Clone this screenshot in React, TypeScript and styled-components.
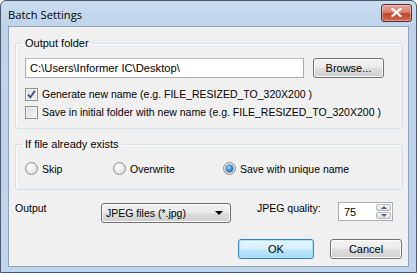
import React from 'react';
import styled, { createGlobalStyle } from 'styled-components';

const GlobalStyle = createGlobalStyle`
  html, body {
    margin: 0;
    padding: 0;
    background: #ffffff;
  }
  body {
    font-family: "Liberation Sans", Arial, sans-serif;
    font-size: 10.5px;
    color: #000;
  }
`;

const Window = styled.div`
  width: 417px;
  height: 273px;
  box-sizing: border-box;
  border: 1px solid #4a5a6c;
  border-radius: 6px 6px 0 0;
  background: linear-gradient(to bottom, #cadcef 0px, #bed3ea 26px, #c0d5eb 100%);
  display: flex;
  flex-direction: column;
  padding: 0 7px 5px 7px;
  overflow: hidden;
`;

const TitleBar = styled.div`
  height: 25px;
  display: flex;
  align-items: center;
  justify-content: space-between;
  flex-shrink: 0;
`;

const Title = styled.span`
  font-family: "Open Sans", "Noto Sans", sans-serif;
  font-size: 11.2px;
  color: #000;
  margin-top: 1px;
`;

const CloseButton = styled.div`
  width: 29px;
  height: 16px;
  margin-right: -3px;
  margin-top: -2px;
  border: 1px solid #5c2a2a;
  border-radius: 3px;
  background: linear-gradient(to bottom, #e3a59a 0%, #d7826f 45%, #c1432b 55%, #cd6a52 100%);
  display: flex;
  align-items: center;
  justify-content: center;
  box-shadow: inset 0 0 0 1px rgba(255, 255, 255, 0.35);
`;

const Content = styled.div`
  flex: 1;
  border: 1px solid #8ea3bb;
  background: #f0f0f0;
  padding: 9px 5px 0 6px;
  display: flex;
  flex-direction: column;
`;

const Group = styled.fieldset<{ $height: number; $gap?: number }>`
  margin: ${(p) => p.$gap ?? 0}px 0 0 0;
  height: ${(p) => p.$height}px;
  box-sizing: border-box;
  border: 1px solid #d5dfe5;
  border-radius: 3px;
  box-shadow: 1px 1px 0 #fff inset;
  padding: 2px 9px 0 9px;
  min-width: 0;
`;

const Legend = styled.legend`
  padding: 0 2px;
  margin-left: -2px;
  line-height: 14px;
  font-size: 11px;
`;

const FolderRow = styled.div`
  display: flex;
  align-items: center;
  gap: 9px;
  margin-top: 6px;
  margin-bottom: 7px;
`;

const TextField = styled.div`
  width: 279px;
  height: 20px;
  box-sizing: border-box;
  border: 1px solid #abadb3;
  border-top-color: #b5b9c0;
  background: #fff;
  display: flex;
  align-items: center;
  padding-left: 4px;
  font-size: 11.2px;
`;

const Button = styled.div<{ $default?: boolean; $width: number }>`
  width: ${(p) => p.$width}px;
  height: 20px;
  box-sizing: border-box;
  border: 1px solid ${(p) => (p.$default ? '#3c7fb1' : '#707070')};
  border-radius: 3px;
  background: ${(p) =>
    p.$default
      ? 'linear-gradient(to bottom, #eaf6fd 0%, #d9f0fc 45%, #bee6fd 55%, #a7d9f5 100%)'
      : 'linear-gradient(to bottom, #f2f2f2 0%, #ebebeb 45%, #dddddd 55%, #cfcfcf 100%)'};
  box-shadow: inset 0 0 0 1px ${(p) => (p.$default ? '#a6e6fb' : '#fcfcfc')};
  display: flex;
  align-items: center;
  justify-content: center;
  font-size: 11px;
`;

const CheckRow = styled.div`
  display: flex;
  align-items: center;
  height: 18px;
  gap: 4px;
`;

const Box = styled.div`
  width: 13px;
  height: 13px;
  box-sizing: border-box;
  border: 1px solid #8e8f8f;
  background: linear-gradient(135deg, #dcdcdc 0%, #f4f4f4 100%);
  box-shadow: inset 0 0 0 1px #f4f4f4;
  position: relative;
  flex-shrink: 0;
`;

const RadioRow = styled.div`
  display: flex;
  align-items: center;
  margin-top: 9px;
`;

const RadioItem = styled.div<{ $width: number }>`
  display: flex;
  align-items: center;
  gap: 4px;
  width: ${(p) => p.$width}px;
`;

const RadioCircle = styled.div`
  width: 13px;
  height: 13px;
  box-sizing: border-box;
  border-radius: 50%;
  border: 1px solid #8e8f8f;
  background: radial-gradient(circle at 40% 40%, #ffffff 0%, #e0e0e0 70%, #c8c8c8 100%);
  display: flex;
  align-items: center;
  justify-content: center;
  flex-shrink: 0;
`;

const RadioDot = styled.div`
  width: 7px;
  height: 7px;
  border-radius: 50%;
  background: radial-gradient(circle at 40% 35%, #a9e2ff 0%, #3a8fd0 45%, #154c8a 100%);
  box-shadow: 0 0 0 0.5px #1c4f80;
`;

const OptionsRow = styled.div`
  display: flex;
  align-items: center;
  margin-top: 12px;
  height: 21px;
`;

const Label = styled.span<{ $width: number; $offset?: number }>`
  width: ${(p) => p.$width}px;
  margin-left: ${(p) => p.$offset ?? 0}px;
  margin-top: -10px;
`;

const Combo = styled.div`
  width: 130px;
  height: 20px;
  box-sizing: border-box;
  border: 1px solid #707070;
  border-radius: 3px;
  background: linear-gradient(to bottom, #f2f2f2 0%, #ebebeb 45%, #dddddd 55%, #cfcfcf 100%);
  box-shadow: inset 0 0 0 1px #fcfcfc;
  display: flex;
  align-items: center;
  justify-content: space-between;
  padding: 0 7px 0 4px;
`;

const Arrow = styled.div`
  width: 0;
  height: 0;
  border-left: 4px solid transparent;
  border-right: 4px solid transparent;
  border-top: 4px solid #000;
`;

const Spin = styled.div`
  width: 55px;
  height: 19px;
  box-sizing: border-box;
  border: 1px solid #abadb3;
  background: #fff;
  display: flex;
  align-items: stretch;
  margin-left: auto;
  margin-right: 10px;
  margin-top: -2px;
`;

const SpinValue = styled.div`
  flex: 1;
  display: flex;
  align-items: center;
  padding-left: 5px;
  font-size: 11px;
`;

const SpinButtons = styled.div`
  width: 15px;
  display: flex;
  flex-direction: column;
  gap: 1px;
  padding: 1px;
`;

const SpinButton = styled.div<{ $up?: boolean }>`
  flex: 1;
  border: 1px solid #b7b7b7;
  border-radius: 2px;
  background: linear-gradient(to bottom, #f6f6f6, #dedede);
  display: flex;
  align-items: center;
  justify-content: center;
  &::after {
    content: '';
    border-left: 3px solid transparent;
    border-right: 3px solid transparent;
    ${(p) => (p.$up ? 'border-bottom: 3px solid #4d6185;' : 'border-top: 3px solid #4d6185;')}
  }
`;

const ButtonRow = styled.div`
  display: flex;
  justify-content: flex-end;
  gap: 16px;
  margin-top: 16px;
  padding-right: 1px;
`;

const CheckMark = () => (
  <svg width="11" height="11" viewBox="0 0 11 11" style={{ position: 'absolute', left: 0, top: 0 }}>
    <path d="M2 5.5 L4.3 8.3 L9 1.8" fill="none" stroke="#3b4f86" strokeWidth="1.8" />
  </svg>
);

const CloseGlyph = () => (
  <svg width="11" height="9" viewBox="0 0 11 9">
    <path d="M1.5 1 L9.5 8 M9.5 1 L1.5 8" stroke="#fff" strokeWidth="2.2" strokeLinecap="square" />
  </svg>
);

const Checkbox: React.FC<{ checked?: boolean; label: string }> = ({ checked, label }) => (
  <CheckRow>
    <Box>{checked && <CheckMark />}</Box>
    <span>{label}</span>
  </CheckRow>
);

const Radio: React.FC<{ on?: boolean; label: string; width: number }> = ({ on, label, width }) => (
  <RadioItem $width={width}>
    <RadioCircle>{on && <RadioDot />}</RadioCircle>
    <span>{label}</span>
  </RadioItem>
);

const App: React.FC = () => {
  return (
    <>
      <GlobalStyle />
      <Window>
        <TitleBar>
          <Title>Batch Settings</Title>
          <CloseButton>
            <CloseGlyph />
          </CloseButton>
        </TitleBar>
        <Content>
          <Group $height={93}>
            <Legend>Output folder</Legend>
            <FolderRow>
              <TextField>C:\Users\Informer IC\Desktop\</TextField>
              <Button $width={71}>Browse...</Button>
            </FolderRow>
            <Checkbox checked label="Generate new name (e.g. FILE_RESIZED_TO_320X200 )" />
            <Checkbox label="Save in initial folder with new name (e.g. FILE_RESIZED_TO_320X200 )" />
          </Group>
          <Group $height={53} $gap={8}>
            <Legend>If file already exists</Legend>
            <RadioRow>
              <Radio label="Skip" width={88} />
              <Radio label="Overwrite" width={110} />
              <Radio on label="Save with unique name" width={160} />
            </RadioRow>
          </Group>
          <OptionsRow>
            <Label $width={86}>Output</Label>
            <Combo>
              <span>JPEG files (*.jpg)</span>
              <Arrow />
            </Combo>
            <Label $width={80} $offset={26}>JPEG quality:</Label>
            <Spin>
              <SpinValue>75</SpinValue>
              <SpinButtons>
                <SpinButton $up />
                <SpinButton />
              </SpinButtons>
            </Spin>
          </OptionsRow>
          <ButtonRow>
            <Button $default $width={76}>OK</Button>
            <Button $width={72}>Cancel</Button>
          </ButtonRow>
        </Content>
      </Window>
    </>
  );
};

export default App;
